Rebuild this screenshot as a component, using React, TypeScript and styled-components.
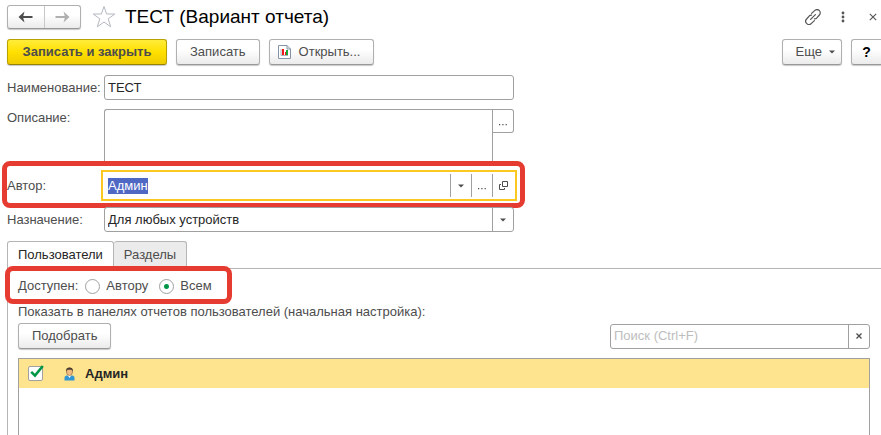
import React, { useEffect, useRef, useState } from 'react';
import styled, { createGlobalStyle, css } from 'styled-components';

const line = '#a0a0a0';
const ink = '#4d4d4d';

const GlobalStyle = createGlobalStyle`
  *, *::before, *::after { box-sizing: border-box; }
  body { margin: 0; background: #fff; overflow: hidden; }
  body, button, input, textarea, select {
    font-family: "Liberation Sans", Arial, sans-serif;
    font-size: 13px;
    line-height: 16px;
    color: ${ink};
  }
  ::selection { background: #4e68c4; color: #fff; }
`;

const Page = styled.main`
  display: flex;
  flex-direction: column;
  min-height: 100vh;
  padding-left: 7px;
`;

const TitleBar = styled.header`
  display: flex;
  align-items: center;
  height: 34px;
`;

const raised = css`
  border: 1px solid #b0b0b0;
  border-bottom-color: #989898;
  border-radius: 3px;
  background: linear-gradient(#fff 40%, #ebebeb);
  box-shadow: 0 1px 1px #c8c8c8;
`;

const History = styled.div`
  ${raised}
  display: flex;
  width: 74px;
  height: 24px;
  margin-right: 11px;
`;

const HistoryButton = styled.button`
  display: flex;
  flex: 1;
  align-items: center;
  justify-content: center;
  padding: 0;
  border: 0;
  background: none;
  color: ${ink};
  & + & { border-left: 1px solid #c8c8c8; }
  &:disabled { color: #b0b0b0; }
`;

const IconButton = styled.button`
  display: flex;
  align-items: center;
  justify-content: center;
  width: 30px;
  height: 24px;
  padding: 0;
  border: 0;
  background: none;
`;

const StarButton = styled(IconButton)`
  width: 24px;
`;

const CloseButton = styled(IconButton)`
  width: 16px;
  margin-left: 7px;
`;

const Title = styled.h1`
  flex: 1;
  margin: 0 0 0 9px;
  font-size: 19px;
  line-height: 24px;
  font-weight: 400;
  color: #000;
`;

const Commands = styled.div`
  display: flex;
  gap: 9px;
  margin-top: 5px;
`;

const Spacer = styled.div`
  flex: 1;
`;

const Button = styled.button<{ $primary?: boolean }>`
  ${raised}
  display: flex;
  align-items: center;
  justify-content: center;
  gap: 8px;
  height: 26px;
  padding: 0 13px;
  white-space: nowrap;
  ${({ $primary }) =>
    $primary &&
    css`
      min-width: 160px;
      border-color: #b8a200;
      border-bottom-color: #948200;
      background: linear-gradient(#ffec3a, #ffe000 50%, #efcc00);
      font-weight: 700;
    `}
`;

const PickButton = styled(Button)`
  min-width: 92px;
`;

const OpenButton = styled(Button)`
  min-width: 105px;
  padding-left: 8px;
`;

const MoreButton = styled(Button)`
  gap: 7px;
  padding-right: 6px;
`;

const HelpButton = styled(Button)`
  width: 30px;
  padding: 0;
  border-right: 0;
  border-radius: 3px 0 0 3px;
  color: #000;
  font-size: 14px;
  font-weight: 700;
`;

const Form = styled.div`
  display: flex;
  flex-direction: column;
  gap: 9px;
  margin-top: 10px;
`;

const FormRow = styled.div`
  position: relative;
  display: grid;
  grid-template-columns: 97px minmax(0, 410px);
`;

const Label = styled.label`
  height: 25px;
  line-height: 25px;
  white-space: nowrap;
`;

const TopLabel = styled(Label)`
  line-height: 18px;
`;

const Field = styled.div<{ $active?: boolean }>`
  display: flex;
  height: 25px;
  border: 1px solid ${line};
  border-radius: 3px;
  background: #fff;
  ${({ $active }) =>
    $active &&
    css`
      border-color: transparent;
      border-radius: 0;
      outline: 2px solid #fac81e;
      outline-offset: 1px;
    `}
`;

const Input = styled.input`
  flex: 1;
  min-width: 0;
  padding: 0 3px;
  border: 0;
  outline: 0;
  background: none;
  color: #262626;
  &::placeholder { color: #bdbdbd; opacity: 1; }
`;

const Select = styled.select`
  flex: 1;
  min-width: 0;
  padding: 0 3px;
  border: 0;
  outline: 0;
  appearance: none;
  background: none;
  color: #262626;
`;

const FieldButton = styled.button`
  display: flex;
  align-items: center;
  justify-content: center;
  width: 21px;
  padding: 0;
  border: 0;
  border-left: 1px solid ${line};
  background: none;
`;

const TextBlock = styled.div`
  display: flex;
  align-items: flex-start;
`;

const TextArea = styled.textarea`
  flex: 1;
  min-width: 0;
  height: 55px;
  padding: 3px;
  border: 1px solid ${line};
  border-right: 0;
  border-radius: 3px 0 0 3px;
  outline: 0;
  resize: none;
`;

const TextEdge = styled.div`
  width: 22px;
  height: 55px;
  border-left: 1px solid ${line};
`;

const TextButton = styled(FieldButton)`
  height: 24px;
  border: 1px solid ${line};
  border-left: 0;
  border-radius: 0 3px 3px 0;
`;

const Tabs = styled.div`
  display: flex;
  margin-top: 9px;
`;

const Tab = styled.button<{ $selected?: boolean }>`
  height: 27px;
  padding: 0 10px;
  border: 1px solid #b5b5b5;
  border-bottom: 0;
  border-radius: 3px 3px 0 0;
  background: ${({ $selected }) => ($selected ? '#fff' : '#ebebeb')};
  color: ${({ $selected }) => ($selected ? '#262626' : ink)};
  & + & { border-left: 0; }
`;

const Panel = styled.section`
  display: flex;
  flex: 1;
  flex-direction: column;
  padding: 0 11px 0 10px;
  border-top: 1px solid #b5b5b5;
  border-left: 1px solid #b5b5b5;
`;

const RadioRow = styled.div`
  position: relative;
  display: flex;
  align-items: center;
  height: 34px;
`;

const RadioLabel = styled.label`
  display: flex;
  align-items: center;
  gap: 6px;
  margin-right: 11px;
`;

const RadioCaption = styled.span`
  margin-right: 7px;
`;

const Radio = styled.input`
  width: 15px;
  height: 15px;
  margin: 0;
  border: 1px solid ${line};
  border-radius: 50%;
  appearance: none;
  background: #fff;
  &:checked { background: radial-gradient(circle, #009646 2px, #fff 3px); }
`;

const Hint = styled.p`
  margin: 0;
  line-height: 18px;
`;

const Tools = styled.div`
  display: flex;
  align-items: center;
  justify-content: space-between;
  margin-top: 2px;
`;

const SearchField = styled(Field)`
  width: 260px;
`;

const List = styled.div`
  flex: 1;
  min-height: 77px;
  margin-top: 9px;
  border: 1px solid ${line};
  border-bottom: 0;
`;

const Users = styled.table`
  width: 100%;
  border-collapse: collapse;
`;

const UserRow = styled.tr`
  height: 29px;
  background: #ffe48f;
`;

const Cell = styled.td<{ $width?: number }>`
  width: ${({ $width }) => ($width ? `${$width}px` : 'auto')};
  padding: 0 0 0 9px;
  color: #262626;
  font-weight: 700;
  svg { display: block; }
`;

const CheckBox = styled.span`
  position: relative;
  display: block;
  width: 15px;
  height: 15px;
  svg {
    position: absolute;
    left: 2px;
    bottom: 3px;
    pointer-events: none;
  }
`;

const CheckInput = styled.input`
  display: block;
  width: 15px;
  height: 15px;
  margin: 0;
  border: 1px solid ${line};
  border-radius: 2px;
  appearance: none;
  background: #fff;
`;

const Marker = styled.div<{ $wide?: boolean }>`
  position: absolute;
  border: 5px solid #e63b30;
  border-radius: 8px;
  pointer-events: none;
  ${({ $wide }) =>
    $wide
      ? css`top: -12px; bottom: -10px; left: -5px; width: 523px;`
      : css`top: -3px; bottom: -1px; left: -13px; width: 227px;`}
`;

const Arrow = ({ back }: { back?: boolean }) => (
  <svg width="15" height="12" viewBox="0 0 15 12" fill="none" stroke="currentColor" strokeWidth="2">
    {back ? <path d="M14.5 6H3" /> : <path d="M0.5 6H12" />}
    <path d={back ? 'M6.5 0.5L0.5 6L6.5 11.5L5 6Z' : 'M8.5 0.5L14.5 6L8.5 11.5L10 6Z'} fill="currentColor" stroke="none" />
  </svg>
);

const Caret = () => (
  <svg width="6" height="4" viewBox="0 0 6 4" fill={ink}>
    <path d="M0 0.5H6L3 3.5Z" />
  </svg>
);

const Dots = () => (
  <svg width="8" height="9" viewBox="0 0 8 9" fill={ink}>
    <path d="M0 7h1.2v1.2H0zM3.3 7h1.2v1.2H3.3zM6.6 7h1.2v1.2H6.6z" />
  </svg>
);

export default function App() {
  const author = useRef<HTMLInputElement>(null);
  const [checked, setChecked] = useState(true);

  useEffect(() => {
    author.current?.focus();
    author.current?.select();
  }, []);

  return (
    <Page>
      <GlobalStyle />
      <TitleBar>
        <History>
          <HistoryButton aria-label="Назад"><Arrow back /></HistoryButton>
          <HistoryButton aria-label="Вперед" disabled><Arrow /></HistoryButton>
        </History>
        <StarButton aria-label="Избранное">
          <svg width="24" height="24" viewBox="0 0 24 24" fill="#fff" stroke="#b4b9c0">
            <path d="M12 1.5L14.6 9H22.8L16.2 13.8L18.7 21.8L12 17L5.3 21.8L7.8 13.8L1.2 9H9.4Z" />
          </svg>
        </StarButton>
        <Title>ТЕСТ (Вариант отчета)</Title>
        <IconButton aria-label="Ссылка">
          <svg width="16" height="16" viewBox="0 0 16 16" fill="none" stroke="#555" strokeWidth="1.2" strokeLinecap="round">
            <path d="M6.6 4.4L9.6 1.6A2.9 2.9 0 0 1 14.4 6L11.6 9.2A2.6 2.6 0 0 1 9.4 9.8" />
            <path d="M9.4 11.6L6.4 14.4A2.9 2.9 0 0 1 1.6 10L4.4 6.8A2.6 2.6 0 0 1 6.6 6.2" />
            <path d="M5.6 10.4L10.4 5.6" />
          </svg>
        </IconButton>
        <IconButton aria-label="Меню">
          <svg width="4" height="12" viewBox="0 0 4 12" fill="#555">
            <circle cx="2" cy="2" r="1.4" /><circle cx="2" cy="6" r="1.4" /><circle cx="2" cy="10" r="1.4" />
          </svg>
        </IconButton>
        <CloseButton aria-label="Закрыть">
          <svg width="8" height="8" viewBox="0 0 8 8" stroke="#555" strokeWidth="1.1">
            <path d="M0.8 0.8L7.2 7.2M7.2 0.8L0.8 7.2" />
          </svg>
        </CloseButton>
      </TitleBar>

      <Commands>
        <Button $primary>Записать и закрыть</Button>
        <Button>Записать</Button>
        <OpenButton>
          <svg width="13" height="14" viewBox="0 0 13 14">
            <path d="M0.5 0.5H9L12.5 4V13.5H0.5Z" fill="#fff" stroke="#8496a5" />
            <path d="M9 0.5V4H12.5" fill="none" stroke="#8496a5" />
            <path d="M3 4V10.5H10" fill="none" stroke="#a8b4bc" />
            <path d="M4 4H6V10H4z" fill="#f01818" />
            <path d="M7 7H8V10H7z" fill="#f01818" />
            <path d="M8 5H10V10H8z" fill="#18a838" />
          </svg>
          Открыть...
        </OpenButton>
        <Spacer />
        <MoreButton>Еще <Caret /></MoreButton>
        <HelpButton>?</HelpButton>
      </Commands>

      <Form>
        <FormRow>
          <Label htmlFor="name">Наименование:</Label>
          <Field><Input id="name" defaultValue="ТЕСТ" /></Field>
        </FormRow>
        <FormRow>
          <TopLabel htmlFor="description">Описание:</TopLabel>
          <TextBlock>
            <TextArea id="description" />
            <TextEdge><TextButton aria-label="Открыть текст"><Dots /></TextButton></TextEdge>
          </TextBlock>
        </FormRow>
        <FormRow>
          <Label htmlFor="author">Автор:</Label>
          <Field $active>
            <Input id="author" ref={author} defaultValue="Админ" />
            <FieldButton aria-label="Список"><Caret /></FieldButton>
            <FieldButton aria-label="Выбрать"><Dots /></FieldButton>
            <FieldButton aria-label="Открыть">
              <svg width="9" height="9" viewBox="0 0 9 9" fill="none" stroke={ink}>
                <path d="M3.5 0.5H8.5V5.5H3.5ZM2 3.5H0.5V8.5H5.5V7" />
              </svg>
            </FieldButton>
          </Field>
          <Marker $wide />
        </FormRow>
        <FormRow>
          <Label htmlFor="purpose">Назначение:</Label>
          <Field>
            <Select id="purpose"><option>Для любых устройств</option></Select>
            <FieldButton aria-label="Список"><Caret /></FieldButton>
          </Field>
        </FormRow>
      </Form>

      <Tabs role="tablist">
        <Tab role="tab" aria-selected $selected>Пользователи</Tab>
        <Tab role="tab" aria-selected={false}>Разделы</Tab>
      </Tabs>
      <Panel role="tabpanel">
        <RadioRow role="radiogroup" aria-labelledby="access">
          <RadioCaption id="access">Доступен:</RadioCaption>
          <RadioLabel><Radio type="radio" name="access" />Автору</RadioLabel>
          <RadioLabel><Radio type="radio" name="access" defaultChecked />Всем</RadioLabel>
          <Marker />
        </RadioRow>
        <Hint>Показать в панелях отчетов пользователей (начальная настройка):</Hint>
        <Tools>
          <PickButton>Подобрать</PickButton>
          <SearchField>
            <Input placeholder="Поиск (Ctrl+F)" aria-label="Поиск" />
            <FieldButton aria-label="Очистить">
              <svg width="6" height="6" viewBox="0 0 6 6" stroke={ink} strokeWidth="1.3">
                <path d="M0.5 0.5L5.5 5.5M5.5 0.5L0.5 5.5" />
              </svg>
            </FieldButton>
          </SearchField>
        </Tools>
        <List>
          <Users>
            <tbody>
              <UserRow>
                <Cell $width={36}>
                  <CheckBox>
                    <CheckInput type="checkbox" aria-label="Админ" checked={checked} onChange={() => setChecked(!checked)} />
                    {checked && (
                      <svg width="14" height="13" viewBox="0 0 14 13" fill="none" stroke="#009646" strokeWidth="2.6">
                        <path d="M1.2 6.8L5 10.6L12.8 1" />
                      </svg>
                    )}
                  </CheckBox>
                </Cell>
                <Cell $width={21}>
                  <svg width="11" height="14" viewBox="0 0 11 14">
                    <path d="M0.5 13.5V11C0.5 9 2 8.5 3.5 8.5H7.5C9 8.5 10.5 9 10.5 11V13.5Z" fill="#3296d2" />
                    <path d="M3.5 8H7.5L5.5 11Z" fill="#fff" />
                    <ellipse cx="5.5" cy="4.8" rx="3" ry="3.7" fill="#f0bc82" stroke="#8a5a30" strokeWidth="0.6" />
                    <path d="M2.2 4.8C1.6 1.2 3.6 0.4 5.5 0.4S9.4 1.2 8.8 4.8L7.8 2.8H3.2Z" fill="#4a3a30" />
                  </svg>
                </Cell>
                <Cell>Админ</Cell>
              </UserRow>
            </tbody>
          </Users>
        </List>
      </Panel>
    </Page>
  );
}
